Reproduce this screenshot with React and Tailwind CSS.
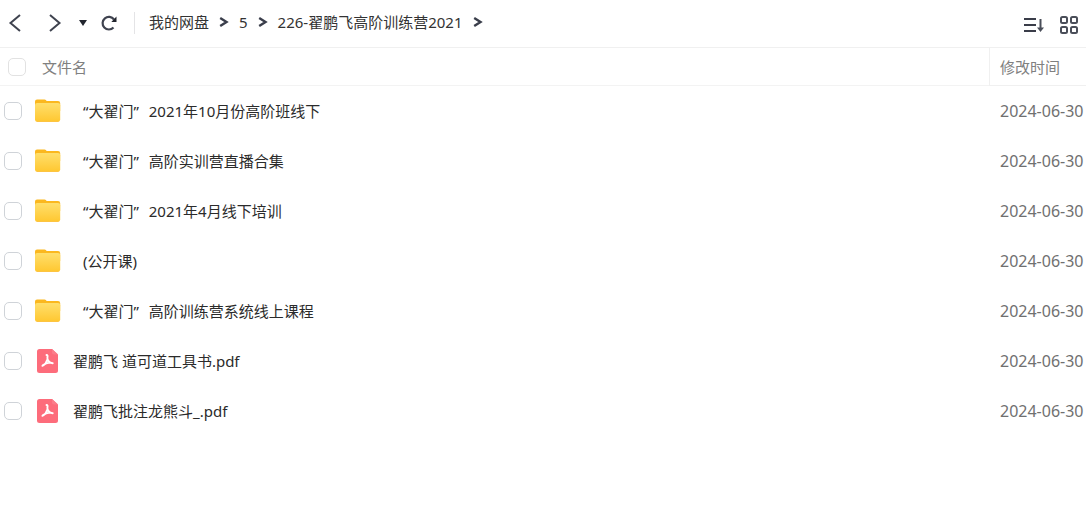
import React, { useState } from 'react'

const folders = [
  { tag: '“大翟门”', name: '2021年10月份高阶班线下' },
  { tag: '“大翟门”', name: '高阶实训营直播合集' },
  { tag: '“大翟门”', name: '2021年4月线下培训' },
  { name: '(公开课)' },
  { tag: '“大翟门”', name: '高阶训练营系统线上课程' },
];

const files = [
  ...folders.map((folder) => ({ ...folder, type: 'folder', date: '2024-06-30' })),
  { name: '翟鹏飞 道可道工具书.pdf', type: 'pdf', date: '2024-06-30' },
  { name: '翟鹏飞批注龙熊斗_.pdf', type: 'pdf', date: '2024-06-30' },
];

const crumbs = ['我的网盘', '5', '226-翟鹏飞高阶训练营2021'];

const FolderIcon = () => (
  <svg width="26" height="24" viewBox="0 0 26 24" aria-hidden="true">
    <defs>
      <linearGradient id="folder" x1="0" y1="0" x2="0" y2="1">
        <stop offset="0" stopColor="#ffdf6c" />
        <stop offset="1" stopColor="#ffc730" />
      </linearGradient>
    </defs>
    <path d="M0 2.500Q0 .5 2 .5h7.500q1 0 1.600.8l.5.700H23q2.200 0 2.200 2V12H0z" fill="#fbb81f" />
    <path d="M0 6.200Q0 4 2.200 4H23q2.200 0 2.200 2.200v14.400q0 2.200-2.200 2.200H2.200Q0 22.800 0 20.600z" fill="url(#folder)" />
    <path d="M1.500 22.500h22.200" stroke="#fbb92c" strokeWidth=".6" />
  </svg>
);

const PdfIcon = () => (
  <svg width="26" height="24" viewBox="0 0 26 24" aria-hidden="true">
    <path d="M4.500 0H17l6 5.500V21.500q0 2.500-2.500 2.500h-16Q2 24 2 21.500v-19Q2 0 4.500 0z" fill="#fd6c7b" />
    <path d="M17 0l6 5.500h-4q-2 0-2-2z" fill="#fb7d8a" />
    <path
      d="M11.500 6q1.500 0 .9 2.600-.2 1.700 1 3.200 1.700 2.200 4.300 2.400M12.400 10.500q-1.200 4.500-5 6.300M7.800 16.200q3.200-2.400 7.200-2.600"
      fill="none"
      stroke="#fff"
      strokeWidth="1.900"
      strokeLinecap="round"
    />
  </svg>
);

const Chevron = () => (
  <svg width="10" height="10" viewBox="0 0 10 10" fill="none" stroke="#3a3e4b" strokeWidth="2.400" aria-hidden="true">
    <path d="M1.200 1l6.300 4-6.300 4" />
  </svg>
);

const Checkbox = ({ className, ...props }) => (
  <input
    type="checkbox"
    className={`size-[18px] shrink-0 appearance-none rounded-[5px] border bg-white checked:bg-blue-500 ${className}`}
    {...props}
  />
);

const Toolbar = () => (
  <header className="flex h-12 items-center border-b border-[#f0f0f0] px-2 pb-0.5">
    <div className="flex items-center text-[#3f434f]">
      <button type="button" aria-label="后退" className="w-10">
        <svg width="14" height="20" viewBox="0 0 14 20" fill="none" stroke="currentColor" strokeWidth="2">
          <path d="M12 2L2.500 10l9.500 8" />
        </svg>
      </button>
      <button type="button" aria-label="前进" className="w-[30px]">
        <svg width="14" height="20" viewBox="0 0 14 20" fill="none" stroke="currentColor" strokeWidth="2">
          <path d="M2 2l9.500 8L2 18" />
        </svg>
      </button>
      <button type="button" aria-label="历史" className="w-[22px]">
        <svg width="10" height="8" viewBox="0 0 10 8" fill="#22252e">
          <path d="M1 1h8L5 7z" />
        </svg>
      </button>
      <button type="button" aria-label="刷新" className="w-[34px]">
        <svg width="18" height="18" viewBox="0 0 18 18" fill="none" stroke="currentColor" strokeWidth="2.200">
          <path d="M13.500 13.500a6.300 6.300 0 1 1 .5-8" />
          <path d="M16.500 2.500v5.500h-5.200z" fill="#22252e" stroke="none" />
        </svg>
      </button>
    </div>

    <nav className="flex grow items-center border-l border-[#e4e4e6] pb-0.5 pl-3.5 text-[#333]">
      {crumbs.map((crumb) => (
        <React.Fragment key={crumb}>
          <a href="#" className="whitespace-nowrap">{crumb}</a>
          <span className="flex w-[30px] justify-center">
            <Chevron />
          </span>
        </React.Fragment>
      ))}
    </nav>

    <div className="flex items-center gap-4 pt-1 text-[#4a4e59]">
      <button type="button" aria-label="排序">
        <svg width="20" height="18" viewBox="0 0 20 18" fill="none" stroke="currentColor" strokeWidth="2">
          <path d="M0 3h12M0 9h12M0 15h12" stroke="#3a3d49" />
          <path d="M16.500 3v11" />
          <path d="M13 11.500h7l-3.500 4.500z" fill="currentColor" stroke="none" />
        </svg>
      </button>
      <button type="button" aria-label="网格视图">
        <svg width="18" height="18" viewBox="0 0 18 18" fill="none" stroke="currentColor" strokeWidth="2">
          <rect x="1" y="1" width="6" height="6" rx="1.500" />
          <rect x="11" y="1" width="6" height="6" rx="1.500" />
          <rect x="1" y="11" width="6" height="6" rx="1.500" />
          <rect x="11" y="11" width="6" height="6" rx="1.500" />
        </svg>
      </button>
    </div>
  </header>
);

const App = () => {
  const [selected, setSelected] = useState([]);

  const toggleFile = (name) => {
    if (selected.includes(name)) {
      setSelected(prev => prev.filter(item => item !== name));
    } else {
      setSelected(prev => [...prev, name]);
    }
  };

  const toggleAll = () => {
    setSelected(selected.length === files.length ? [] : files.map(file => file.name));
  };

  return (
    <div className="min-h-screen bg-white font-['Noto_Sans','Noto_Sans_CJK_SC',sans-serif] text-[15px] leading-5">
      <Toolbar />

      <table className="w-full table-fixed border-separate border-spacing-0 text-left">
        <thead>
          <tr className="h-[38px] text-[#808080]">
            <th className="border-b border-[#f3f3f3] p-0 pl-2 font-normal">
              <label className="flex items-center gap-4">
                <Checkbox
                  className="border-[#e2e2e2]"
                  checked={selected.length === files.length}
                  onChange={toggleAll}
                />
                文件名
              </label>
            </th>
            <th className="w-[97px] border-b border-l border-[#f0f0f0] p-0 pl-2.5 font-normal">修改时间</th>
          </tr>
        </thead>
        <tbody>
          {files.map((file) => (
            <tr key={file.name} className="h-[50px]">
              <td className="p-0 pl-1">
                <label className="flex items-center text-[#2b2b2b]">
                  <Checkbox
                    className="border-[#cfd3d8]"
                    checked={selected.includes(file.name)}
                    onChange={() => toggleFile(file.name)}
                  />
                  <span className="ml-[13px] mr-3 shrink-0">
                    {file.type === 'folder' ? <FolderIcon /> : <PdfIcon />}
                  </span>
                  <span className={`flex gap-2.5 whitespace-nowrap ${file.type === 'folder' ? 'pl-2.5' : ''}`}>
                    {file.tag && <span>{file.tag}</span>}
                    <span>{file.name}</span>
                  </span>
                </label>
              </td>
              <td className="whitespace-nowrap p-0 pl-[11px] text-base text-[#707070]">{file.date}</td>
            </tr>
          ))}
        </tbody>
      </table>
    </div>
  );
}

export default App;
